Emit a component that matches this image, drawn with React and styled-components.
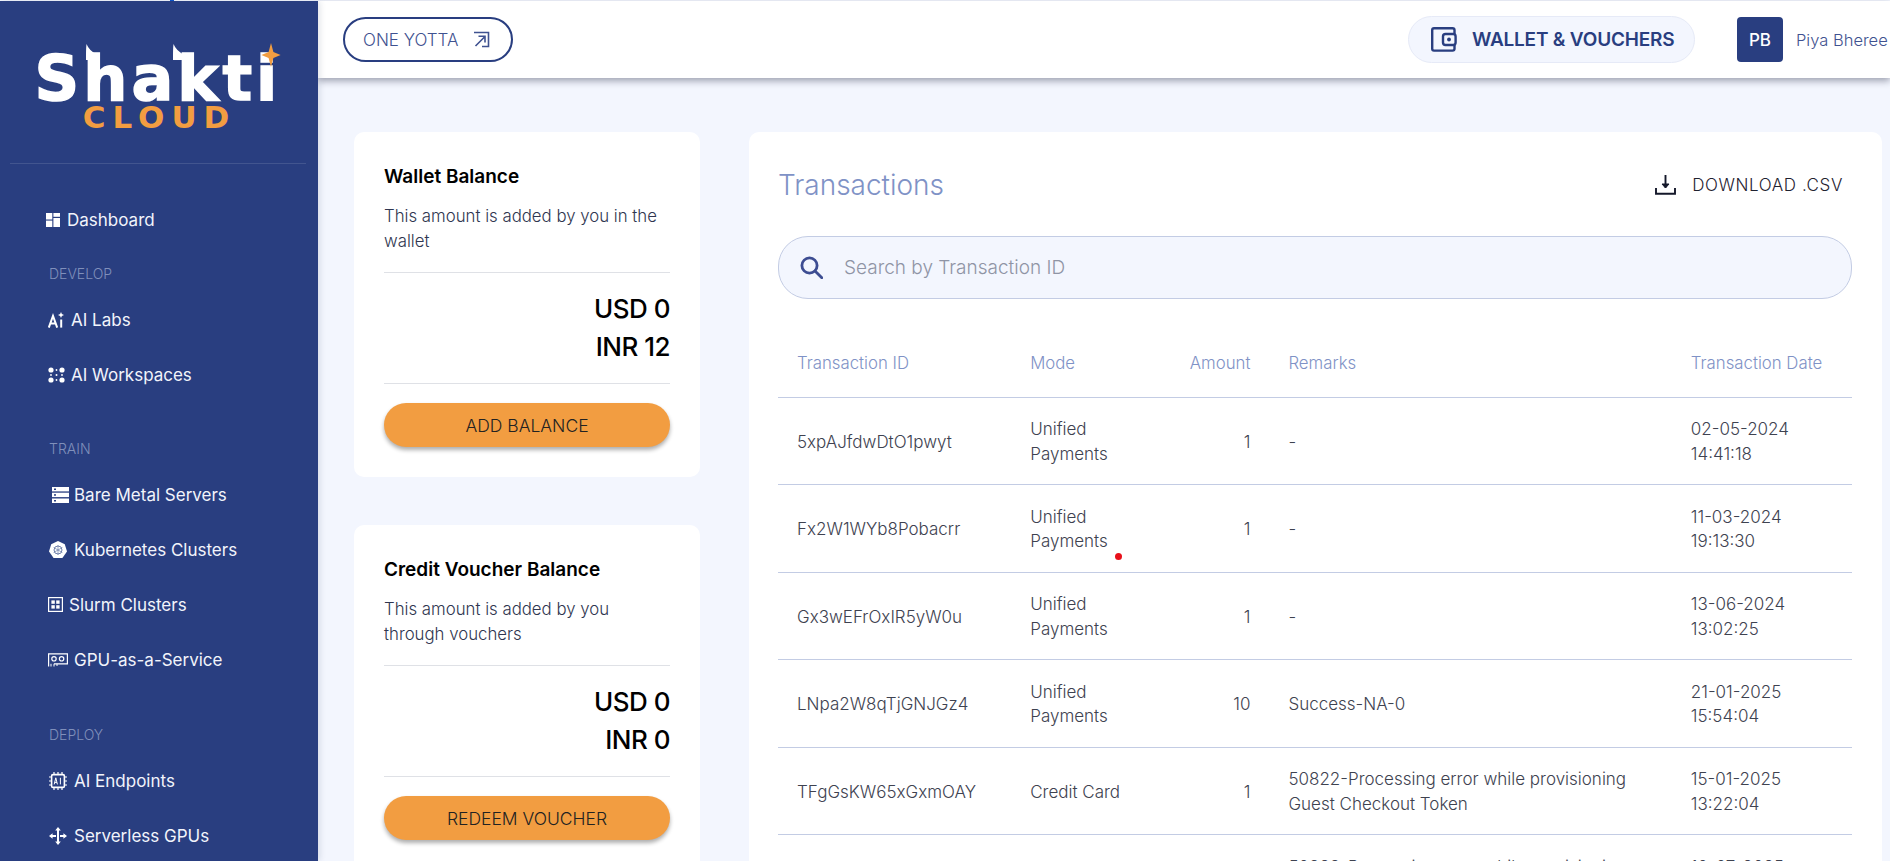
import styled, { createGlobalStyle } from 'styled-components';

const GlobalStyle = createGlobalStyle`
  * { box-sizing: border-box; }
  html, body { margin: 0; padding: 0; height: 100%; overflow: hidden; }
  body {
    font-family: Inter, "Noto Sans", "Liberation Sans", sans-serif;
    background: #ffffff;
  }
`;

const Page = styled.div`
  position: relative;
  display: flex;
  height: 100vh;
  padding-top: 1px;
  overflow: hidden;
  background: #f3f6fe;
`;

const BrowserTick = styled.div`
  position: absolute;
  top: 0;
  left: 170px;
  width: 4px;
  height: 1px;
  background: #0b57d0;
`;

const CursorDot = styled.div`
  position: absolute;
  top: 553px;
  left: 1115px;
  width: 7px;
  height: 7px;
  border-radius: 50%;
  background: #e8101a;
`;

const Sidebar = styled.aside`
  flex: 0 0 318px;
  background: #293e80;
  color: #fff;
  box-shadow: 2px 0 6px rgba(20, 30, 70, 0.12);
  z-index: 3;
`;

const LogoArea = styled.div`
  display: flex;
  flex-direction: column;
  align-items: center;
  height: 163px;
  margin: 0 12px 0 10px;
  padding-top: 53px;
  border-bottom: 1px solid #42558f;
`;

const LogoWord = styled.div`
  position: relative;
  font-family: "DejaVu Sans", sans-serif;
  font-weight: 700;
  font-size: 62px;
  line-height: 50px;
  letter-spacing: 4px;
  -webkit-text-stroke: 1.5px #fff;
  color: #fff;
`;

const LogoStar = styled.svg`
  position: absolute;
  top: -11px;
  right: 0;
  width: 20px;
  height: 24px;
`;

const LogoHorn = styled.svg`
  position: absolute;
  top: -10px;
  left: ${({ $left }) => $left}px;
  width: 12px;
  height: 16px;
`;

const LogoSub = styled.div`
  padding-left: 3px;
  font-family: "DejaVu Sans", sans-serif;
  font-weight: 700;
  font-size: 31px;
  line-height: 27px;
  letter-spacing: 7px;
  color: #f29d41;
`;

const Nav = styled.nav`
  padding-top: 28px;
`;

const SectionLabel = styled.div`
  height: 20px;
  margin: ${({ $top }) => $top}px 0 8px 49px;
  font-size: 14px;
  font-weight: 300;
  line-height: 20px;
  color: #8090bb;
`;

const NavItem = styled.a`
  display: flex;
  align-items: center;
  height: 55px;
  font-size: 17px;
  font-weight: 400;
  color: #f2f4fb;
  white-space: nowrap;
`;

const NavIcon = styled.span`
  display: flex;
  align-items: center;
  width: ${({ $textX }) => $textX}px;
  padding-left: ${({ $iconX }) => $iconX}px;
  svg { display: block; }
`;

const Main = styled.div`
  flex: 1;
  min-width: 0;
  display: flex;
  flex-direction: column;
`;

const TopBar = styled.header`
  flex: 0 0 77px;
  display: flex;
  align-items: center;
  padding-left: 25px;
  background: #fff;
  box-shadow: 0 3px 7px rgba(30, 35, 60, 0.4);
  z-index: 2;
`;

const YottaButton = styled.button`
  display: flex;
  align-items: center;
  gap: 15px;
  width: 170px;
  height: 45px;
  padding: 0 0 0 18px;
  background: #fff;
  border: 2px solid #293e80;
  border-radius: 23px;
  font: inherit;
  font-size: 17px;
  font-weight: 300;
  color: #3f5290;
  white-space: nowrap;
`;

const WalletButton = styled.button`
  display: flex;
  align-items: center;
  gap: 15px;
  width: 287px;
  height: 47px;
  margin-left: auto;
  padding: 0 0 0 22px;
  background: #f3f6fe;
  border: 1px solid #e6eaf7;
  border-radius: 24px;
  font: inherit;
  font-size: 19px;
  font-weight: 600;
  letter-spacing: -0.2px;
  color: #293e80;
  white-space: nowrap;
`;

const Avatar = styled.div`
  flex: 0 0 46px;
  display: flex;
  align-items: center;
  justify-content: center;
  height: 45px;
  margin-left: 42px;
  background: #293e80;
  border-radius: 4px;
  color: #fff;
  font-size: 17px;
  font-weight: 500;
`;

const UserName = styled.div`
  flex: 0 0 94px;
  margin-left: 13px;
  font-size: 16.5px;
  font-weight: 300;
  color: #3f5290;
  white-space: nowrap;
  overflow: hidden;
`;

const Content = styled.main`
  flex: 1;
  min-height: 0;
  display: flex;
  gap: 49px;
  padding: 54px 8px 0 36px;
`;

const LeftColumn = styled.div`
  flex: 0 0 346px;
  display: flex;
  flex-direction: column;
  gap: 48px;
`;

const BalanceCard = styled.section`
  flex: none;
  padding: 30px;
  background: #fff;
  border-radius: 10px;
`;

const CardTitle = styled.h2`
  margin: 0;
  font-size: 19px;
  font-weight: 600;
  line-height: 30px;
  color: #000;
`;

const CardText = styled.p`
  margin: 12px 0 18px;
  font-size: 16.8px;
  font-weight: 300;
  line-height: 25px;
  color: #2f3650;
`;

const Amounts = styled.div`
  padding: 17px 0;
  border-top: 1px solid #dfe1e6;
  border-bottom: 1px solid #dfe1e6;
  text-align: right;
  font-size: 26px;
  font-weight: 500;
  line-height: 38px;
  letter-spacing: -0.5px;
  color: #000;
`;

const OrangeButton = styled.button`
  display: block;
  width: 100%;
  height: 44px;
  margin-top: 19px;
  background: #f29d41;
  border: 0;
  border-radius: 22px;
  box-shadow: 0 3px 4px rgba(0, 0, 0, 0.32);
  font: inherit;
  font-size: 17.5px;
  font-weight: 300;
  color: #222;
`;

const TransactionsPanel = styled.section`
  flex: 1;
  min-width: 0;
  padding: 29px 30px 0 29px;
  background: #fff;
  border-radius: 10px 10px 0 0;
`;

const PanelHeader = styled.div`
  display: flex;
  align-items: center;
  justify-content: space-between;
  height: 48px;
  margin-bottom: 27px;
`;

const PanelTitle = styled.h1`
  margin: 0;
  font-size: 28px;
  font-weight: 300;
  color: #7f92c6;
`;

const DownloadLink = styled.a`
  display: flex;
  align-items: center;
  gap: 16px;
  padding-right: 9px;
  font-size: 17px;
  font-weight: 300;
  letter-spacing: 0.6px;
  color: #1f2230;
`;

const SearchBox = styled.label`
  display: flex;
  align-items: center;
  gap: 19px;
  height: 63px;
  padding-left: 21px;
  background: #f3f6fe;
  border: 1px solid #c3cce4;
  border-radius: 30px;
`;

const SearchInput = styled.input`
  flex: 1;
  border: 0;
  outline: 0;
  background: transparent;
  font: inherit;
  font-size: 19px;
  font-weight: 300;
  color: #333;
  &::placeholder { color: #8f94a5; opacity: 1; }
`;

const Table = styled.table`
  width: 100%;
  margin-top: 28px;
  border-collapse: collapse;
  table-layout: fixed;
`;

const HeadCell = styled.th`
  width: ${({ $w }) => $w}px;
  height: 70px;
  padding: 2px 19px 0;
  border-bottom: 1px solid #c3cce4;
  text-align: ${({ $right }) => ($right ? 'right' : 'left')};
  font-size: 16.8px;
  font-weight: 300;
  color: #7f92c6;
`;

const Cell = styled.td`
  height: 87.5px;
  padding: 2px 19px 0;
  border-bottom: 1px solid #c3cce4;
  text-align: ${({ $right }) => ($right ? 'right' : 'left')};
  font-size: 17px;
  font-weight: 300;
  line-height: 24.5px;
  color: #3e4250;
`;

const DashboardIcon = () => (
  <svg width="14" height="14" viewBox="0 0 14 14" fill="#fff">
    <rect width="6.3" height="6.5" />
    <rect y="7.6" width="6.3" height="6.4" />
    <rect x="7.4" width="6.6" height="3.8" />
    <rect x="7.4" y="5" width="6.6" height="9" />
  </svg>
);

const LabsIcon = () => (
  <svg width="16" height="16" viewBox="0 0 16 16" fill="none" stroke="#fff" strokeWidth="2">
    <path d="M0.8 15.6 L5 4 L9.2 15.6 M2.5 11.5 H7.5" />
    <path d="M13.2 7.5 V15.6" />
    <path d="M13 0 L13.9 2.1 L16 3 L13.9 3.9 L13 6 L12.1 3.9 L10 3 L12.1 2.1 Z" fill="#fff" stroke="none" />
  </svg>
);

const WorkspacesIcon = () => (
  <svg width="17" height="16" viewBox="0 0 17 16" fill="#fff">
    <circle cx="3" cy="3" r="2.6" />
    <circle cx="14" cy="3" r="2.6" />
    <circle cx="3" cy="13" r="2.6" />
    <circle cx="14" cy="13" r="2.6" />
    <circle cx="8.5" cy="3" r="0.9" />
    <circle cx="8.5" cy="13" r="0.9" />
    <circle cx="8.5" cy="8" r="1" />
    <circle cx="3" cy="8" r="0.9" />
    <circle cx="14" cy="8" r="0.9" />
  </svg>
);

const ServerIcon = () => (
  <svg width="17" height="16" viewBox="0 0 17 16">
    <rect width="17" height="4.4" fill="#fff" />
    <rect y="5.7" width="17" height="4.4" fill="#fff" />
    <rect y="11.5" width="17" height="4.5" fill="#fff" />
    <rect x="2" y="1.5" width="2" height="1.5" fill="#293e80" />
    <rect x="2" y="7.2" width="2" height="1.5" fill="#293e80" />
    <rect x="2" y="13" width="2" height="1.5" fill="#293e80" />
  </svg>
);

const KubernetesIcon = () => (
  <svg width="18" height="18" viewBox="0 0 18 18">
    <path d="M9 0 L15.8 3.2 L18 10.6 L13.4 17 H4.6 L0 10.6 L2.2 3.2 Z" fill="#fff" />
    <circle cx="9" cy="9" r="4" fill="none" stroke="#6f7fab" strokeWidth="1" />
    <path d="M9 4 V14 M4.6 6.5 L13.4 11.5 M13.4 6.5 L4.6 11.5" stroke="#6f7fab" strokeWidth="0.7" />
  </svg>
);

const SlurmIcon = () => (
  <svg width="15" height="15" viewBox="0 0 15 15" fill="#fff">
    <rect x="0.6" y="0.6" width="13.8" height="13.8" fill="none" stroke="#fff" strokeWidth="1.2" />
    <rect x="3.4" y="3.4" width="3.4" height="3.4" />
    <rect x="8.2" y="3.4" width="3.4" height="3.4" />
    <rect x="3.4" y="8.2" width="3.4" height="3.4" />
    <rect x="8.2" y="8.2" width="3.4" height="3.4" />
  </svg>
);

const GpuIcon = () => (
  <svg width="20" height="14" viewBox="0 0 20 14" fill="none" stroke="#fff" strokeWidth="1.2">
    <path d="M0.6 13.5 V0.9 H19.4 V10.8 H6" />
    <circle cx="6" cy="5.8" r="2.2" />
    <circle cx="13.6" cy="5.8" r="2.2" />
    <path d="M3 10.8 V13.5 M6 10.8 V13.5 M9 10.8 V13" strokeWidth="1" />
  </svg>
);

const ChipIcon = () => (
  <svg width="18" height="18" viewBox="0 0 18 18" fill="none" stroke="#fff">
    <rect x="2.6" y="2.6" width="12.8" height="12.8" rx="1.5" strokeWidth="1.6" />
    <path d="M5 0 V2 M9 0 V2 M13 0 V2 M5 16 V18 M9 16 V18 M13 16 V18 M0 5 H2 M0 9 H2 M0 13 H2 M16 5 H18 M16 9 H18 M16 13 H18" strokeWidth="1.2" />
    <path d="M5.2 12.4 L6.8 5.8 L8.4 12.4 M5.7 10.4 H7.9 M11.4 5.8 V12.4" strokeWidth="1" />
  </svg>
);

const ServerlessIcon = () => (
  <svg width="18" height="18" viewBox="0 0 18 18" fill="#fff">
    <rect x="8" y="2" width="2" height="14" />
    <rect x="2" y="8" width="5" height="2" />
    <rect x="11" y="8" width="5" height="2" />
    <path d="M9 0 L11.8 3.6 H6.2 Z M9 18 L6.2 14.4 H11.8 Z M0 9 L3.6 6.2 V11.8 Z M18 9 L14.4 11.8 V6.2 Z" />
  </svg>
);

const ExternalIcon = () => (
  <svg width="17" height="17" viewBox="0 0 17 17" fill="none" stroke="#3f5290" strokeWidth="1.6">
    <path d="M1 1.5 H15.5 V15.5 H9" />
    <path d="M2.5 15 L11.5 6 M5.5 5.2 H12 V11.5" />
  </svg>
);

const WalletIcon = () => (
  <svg width="26" height="25" viewBox="0 0 26 25" fill="none" stroke="#293e80" strokeWidth="2.4">
    <path d="M23.5 7 V3 Q23.5 1.2 21.5 1.2 H3 Q1.2 1.2 1.2 3 V21.8 Q1.2 23.6 3 23.6 H21.5 Q23.5 23.6 23.5 21.8 V18" />
    <rect x="12" y="7" width="12.6" height="11" rx="2.5" />
    <circle cx="18" cy="12.5" r="1.9" fill="#293e80" stroke="none" />
  </svg>
);

const DownloadIcon = () => (
  <svg width="21" height="20" viewBox="0 0 21 20" fill="none" stroke="#14182a" strokeWidth="1.9">
    <path d="M10.5 0 V12.5" />
    <path d="M7 9 L10.5 13 L14 9 Z" fill="#14182a" strokeWidth="1" />
    <path d="M1 13 V18.8 H20 V13" />
  </svg>
);

const SearchIcon = () => (
  <svg width="23" height="23" viewBox="0 0 23 23" fill="none" stroke="#3d4d92" strokeWidth="2.8">
    <circle cx="9.5" cy="9.5" r="7.6" />
    <path d="M15 15 L21.8 21.8" strokeLinecap="round" />
  </svg>
);

const navGroups = [
  {
    items: [{ label: 'Dashboard', Icon: DashboardIcon, iconX: 46, textX: 67 }],
  },
  {
    title: 'DEVELOP',
    top: 17,
    items: [
      { label: 'AI Labs', Icon: LabsIcon, iconX: 48, textX: 71 },
      { label: 'AI Workspaces', Icon: WorkspacesIcon, iconX: 48, textX: 71 },
    ],
  },
  {
    title: 'TRAIN',
    top: 37,
    items: [
      { label: 'Bare Metal Servers', Icon: ServerIcon, iconX: 52, textX: 74 },
      { label: 'Kubernetes Clusters', Icon: KubernetesIcon, iconX: 49, textX: 74 },
      { label: 'Slurm Clusters', Icon: SlurmIcon, iconX: 48, textX: 69 },
      { label: 'GPU-as-a-Service', Icon: GpuIcon, iconX: 48, textX: 74 },
    ],
  },
  {
    title: 'DEPLOY',
    top: 38,
    items: [
      { label: 'AI Endpoints', Icon: ChipIcon, iconX: 49, textX: 74 },
      { label: 'Serverless GPUs', Icon: ServerlessIcon, iconX: 49, textX: 74 },
    ],
  },
];

const transactions = [
  { id: '5xpAJfdwDtO1pwyt', mode: 'Unified Payments', amount: 1, remarks: '-', date: '02-05-2024', time: '14:41:18' },
  { id: 'Fx2W1WYb8Pobacrr', mode: 'Unified Payments', amount: 1, remarks: '-', date: '11-03-2024', time: '19:13:30' },
  { id: 'Gx3wEFrOxIR5yW0u', mode: 'Unified Payments', amount: 1, remarks: '-', date: '13-06-2024', time: '13:02:25' },
  { id: 'LNpa2W8qTjGNJGz4', mode: 'Unified Payments', amount: 10, remarks: 'Success-NA-0', date: '21-01-2025', time: '15:54:04' },
  { id: 'TFgGsKW65xGxmOAY', mode: 'Credit Card', amount: 1, remarks: '50822-Processing error while provisioning Guest Checkout Token', date: '15-01-2025', time: '13:22:04' },
  // only the top of this row's first line is on screen
  { id: '', mode: '', amount: '', remarks: '50822-Processing error while provisioning Guest Checkout Token', date: '10-07-2025', time: '11:08:52' },
];

const Horn = ({ left }) => (
  <LogoHorn $left={left} viewBox="0 0 12 16">
    <path d="M1 16 C1 9 1 4 1.5 0 C3 4 7 8 12 11 V16 Z" fill="#fff" />
  </LogoHorn>
);

function App() {
  return (
    <Page>
      <GlobalStyle />
      <BrowserTick />
      <Sidebar>
        <LogoArea>
          <LogoWord>
            Shakti
            <Horn left={50} />
            <Horn left={137} />
            <LogoStar viewBox="0 0 16 20">
              <path d="M8 0 L10 7.5 L16 10 L10 12.5 L8 20 L6 12.5 L0 10 L6 7.5 Z" fill="#f29d41" />
            </LogoStar>
          </LogoWord>
          <LogoSub>CLOUD</LogoSub>
        </LogoArea>
        <Nav>
          {navGroups.map((group, i) => (
            <div key={i}>
              {group.title && <SectionLabel $top={group.top}>{group.title}</SectionLabel>}
              {group.items.map(({ label, Icon, iconX, textX }) => (
                <NavItem key={label}>
                  <NavIcon $iconX={iconX} $textX={textX}><Icon /></NavIcon>
                  {label}
                </NavItem>
              ))}
            </div>
          ))}
        </Nav>
      </Sidebar>

      <Main>
        <TopBar>
          <YottaButton>ONE YOTTA <ExternalIcon /></YottaButton>
          <WalletButton><WalletIcon /> WALLET &amp; VOUCHERS</WalletButton>
          <Avatar>PB</Avatar>
          <UserName>Piya Bheree</UserName>
        </TopBar>

        <Content>
          <LeftColumn>
            <BalanceCard>
              <CardTitle>Wallet Balance</CardTitle>
              <CardText>This amount is added by you in the wallet</CardText>
              <Amounts>USD 0<br />INR 12</Amounts>
              <OrangeButton>ADD BALANCE</OrangeButton>
            </BalanceCard>
            <BalanceCard>
              <CardTitle>Credit Voucher Balance</CardTitle>
              <CardText>This amount is added by you through vouchers</CardText>
              <Amounts>USD 0<br />INR 0</Amounts>
              <OrangeButton>REDEEM VOUCHER</OrangeButton>
            </BalanceCard>
          </LeftColumn>

          <TransactionsPanel>
            <PanelHeader>
              <PanelTitle>Transactions</PanelTitle>
              <DownloadLink><DownloadIcon /> DOWNLOAD .CSV</DownloadLink>
            </PanelHeader>
            <SearchBox>
              <SearchIcon />
              <SearchInput placeholder="Search by Transaction ID" />
            </SearchBox>
            <Table>
              <thead>
                <tr>
                  <HeadCell $w={233}>Transaction ID</HeadCell>
                  <HeadCell $w={139}>Mode</HeadCell>
                  <HeadCell $w={119} $right>Amount</HeadCell>
                  <HeadCell $w={402}>Remarks</HeadCell>
                  <HeadCell $w={180}>Transaction Date</HeadCell>
                </tr>
              </thead>
              <tbody>
                {transactions.map((t, i) => (
                  <tr key={i}>
                    <Cell>{t.id}</Cell>
                    <Cell>{t.mode}</Cell>
                    <Cell $right>{t.amount}</Cell>
                    <Cell>{t.remarks}</Cell>
                    <Cell>{t.date}<br />{t.time}</Cell>
                  </tr>
                ))}
              </tbody>
            </Table>
          </TransactionsPanel>
        </Content>
      </Main>
      <CursorDot />
    </Page>
  );
}

export default App;
